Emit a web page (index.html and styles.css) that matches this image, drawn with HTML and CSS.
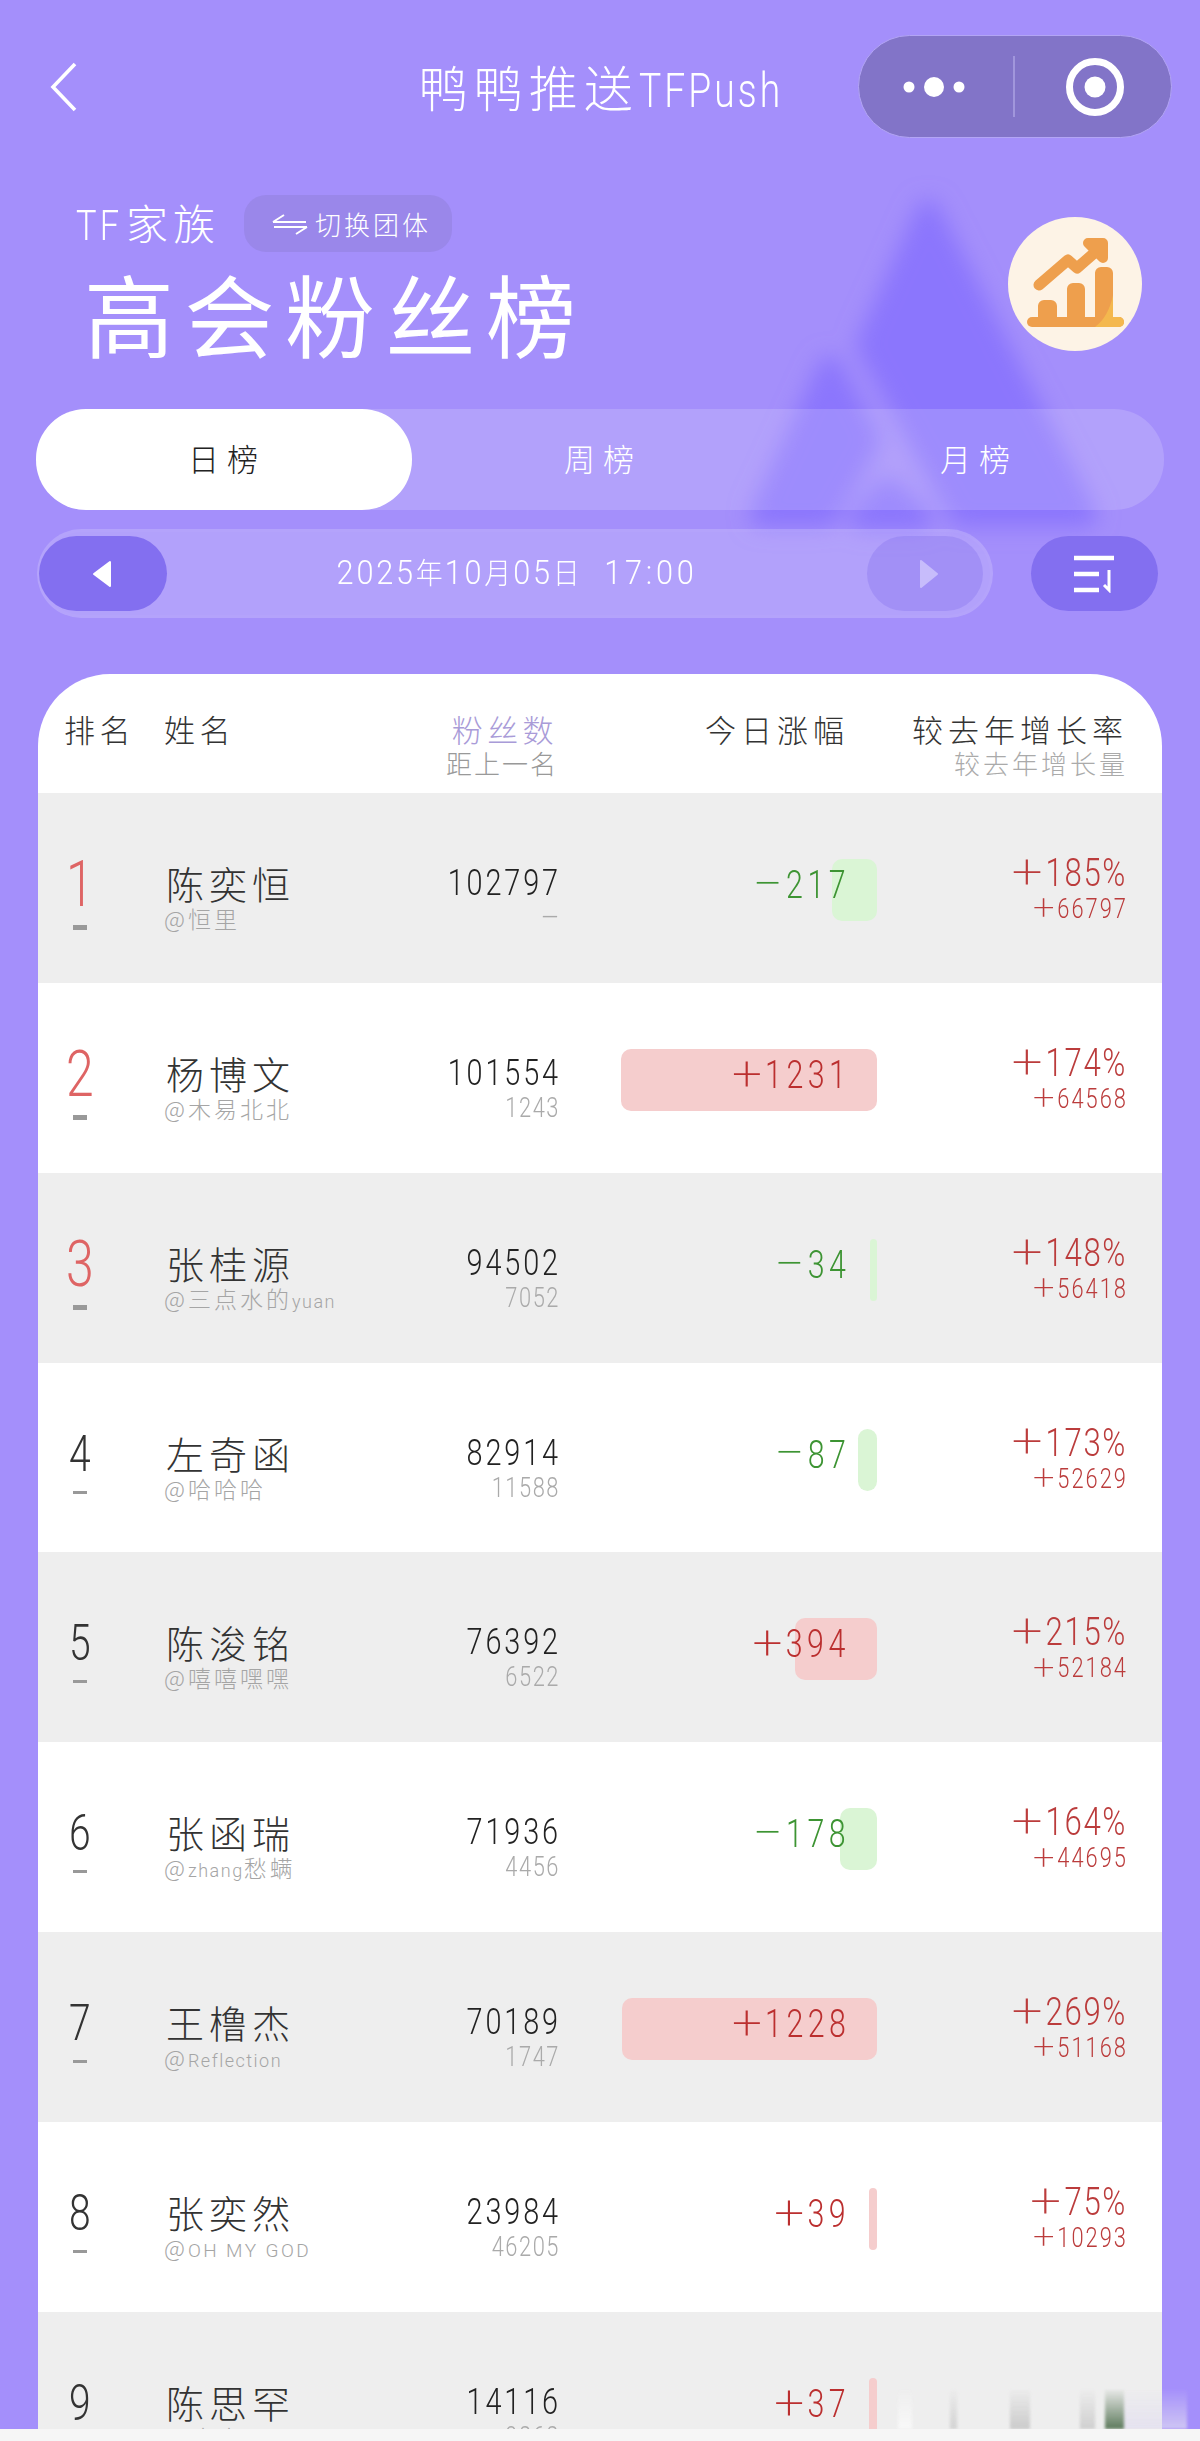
FILE: index.html
```html
<!DOCTYPE html>
<html lang="zh-CN">
<head>
<meta charset="utf-8">
<title>高会粉丝榜</title>
<link rel="stylesheet" href="styles.css">
</head>
<body>
<div class="page">
  <svg class="bgshapes" viewBox="0 0 1200 640" width="1200" height="640" aria-hidden="true">
    <defs><filter id="soft" x="-30%" y="-30%" width="160%" height="160%"><feGaussianBlur stdDeviation="11"/></filter></defs>
    <g filter="url(#soft)" fill="#8b76fd" stroke="#8b76fd" stroke-width="24" stroke-linejoin="round">
      <polygon points="928,212 1085,515 962,515 868,345"/>
      <polygon points="830,368 868,440 826,515 762,515"/>
      <polygon points="888,490 920,518 862,518"/>
    </g>
  </svg>

  <header class="nav">
    <svg class="back" viewBox="0 0 28 52" width="28" height="52"><path d="M25 3 3 26l22 23" fill="none" stroke="#fff" stroke-width="3.6"/></svg>
    <div class="nav-title">鸭鸭推送<span class="nav-latin">TFPush</span></div>
    <div class="capsule">
      <svg class="dots" viewBox="0 0 64 24" width="64" height="24"><circle cx="6" cy="12" r="5.5" fill="#fff"/><circle cx="31" cy="12" r="10" fill="#fff"/><circle cx="56" cy="12" r="5.5" fill="#fff"/></svg>
      <span class="capsule-line"></span>
      <svg class="target" viewBox="0 0 58 58" width="58" height="58"><circle cx="29" cy="29" r="25.5" fill="none" stroke="#fff" stroke-width="7"/><circle cx="29" cy="29" r="10.5" fill="#fff"/></svg>
    </div>
  </header>

  <section class="hero">
    <div class="hero-left">
      <div class="hero-top">
        <span class="family"><span class="latin">TF</span>家族</span>
        <span class="switch">
          <svg viewBox="0 0 36 22" width="36" height="22"><path d="M1 9h33M1 9l11-7M2 14h33M35 14l-11 7" fill="none" stroke="#fff" stroke-width="2"/></svg>
          切换团体
        </span>
      </div>
      <h1 class="hero-title">高会粉丝榜</h1>
    </div>
    <div class="hero-icon">
      <svg viewBox="0 0 134 134" width="134" height="134">
        <circle cx="67" cy="67" r="67" fill="#fdf3e6"/>
        <path d="M31 68 60 43l9 8 23-20" fill="none" stroke="#ee9f4d" stroke-width="11" stroke-linecap="round" stroke-linejoin="round"/>
        <path d="M80 26h15v15z" fill="#ee9f4d" stroke="#ee9f4d" stroke-width="10" stroke-linejoin="round"/>
        <path d="M30 106V89a6 6 0 0 1 6-6h7a6 6 0 0 1 6 6v17zM59 106V72a6 6 0 0 1 6-6h6a6 6 0 0 1 6 6v34zM87 106V56a6 6 0 0 1 6-6h6a6 6 0 0 1 6 6v50z" fill="#ee9f4d"/>
        <rect x="19" y="100" width="97" height="10" rx="5" fill="#ee9f4d"/>
        <path d="M87 110c9-7 15-17 18-32v22h6a5 5 0 0 1 0 10z" fill="#f4b84e"/>
      </svg>
    </div>
  </section>

  <nav class="tabs">
    <div class="tab tab-on">日榜</div>
    <div class="tab">周榜</div>
    <div class="tab">月榜</div>
  </nav>

  <div class="datebar">
    <div class="track">
      <div class="step step-on"><svg viewBox="0 0 20 28" width="20" height="28"><path d="M18 2v24L2 14z" fill="#fff" stroke="#fff" stroke-width="2" stroke-linejoin="round"/></svg></div>
      <div class="date"><span>2025</span>年<span>10</span>月<span>05</span>日 <span class="time">17:00</span></div>
      <div class="step step-off"><svg viewBox="0 0 20 30" width="20" height="30"><path d="M2 2v26l16-13z" fill="#c7bcfb" stroke="#c7bcfb" stroke-width="2" stroke-linejoin="round"/></svg></div>
    </div>
    <div class="sort"><svg viewBox="0 0 42 38" width="42" height="38"><path d="M0 3h40M0 19h25M0 35h25" fill="none" stroke="#fff" stroke-width="4.5"/><path d="M35 15v20l-5-5" fill="none" stroke="#fff" stroke-width="3"/></svg></div>
  </div>

  <main class="board">
    <div class="thead">
      <div class="th th-rank">排名</div>
      <div class="th th-name">姓名</div>
      <div class="th th-fans"><div class="th-main th-purple">粉丝数</div><div class="th-sub">距上一名</div></div>
      <div class="th th-delta">今日涨幅</div>
      <div class="th th-rate"><div class="th-main">较去年增长率</div><div class="th-sub th-light">较去年增长量</div></div>
    </div>

    <div class="row row-gray">
      <div class="rank"><div class="num top">1</div><div class="dash dash-top"></div></div>
      <div class="who"><div class="name">陈奕恒</div><div class="handle">@恒里</div></div>
      <div class="fans"><div class="fans-num">102797</div><div class="gap gap-none">—</div></div>
      <div class="delta down"><span class="bar" style="width:45px"></span><span class="delta-num"><span class="sign">−</span>217</span></div>
      <div class="rate"><div class="pct"><span class="sign">+</span>185%</div><div class="amt"><span class="sign">+</span>66797</div></div>
    </div>
    <div class="row">
      <div class="rank"><div class="num top">2</div><div class="dash dash-top"></div></div>
      <div class="who"><div class="name">杨博文</div><div class="handle">@木易北北</div></div>
      <div class="fans"><div class="fans-num">101554</div><div class="gap">1243</div></div>
      <div class="delta up"><span class="bar" style="width:256px"></span><span class="delta-num"><span class="sign">+</span>1231</span></div>
      <div class="rate"><div class="pct"><span class="sign">+</span>174%</div><div class="amt"><span class="sign">+</span>64568</div></div>
    </div>
    <div class="row row-gray">
      <div class="rank"><div class="num top">3</div><div class="dash dash-top"></div></div>
      <div class="who"><div class="name">张桂源</div><div class="handle">@三点水的<span class="lat">yuan</span></div></div>
      <div class="fans"><div class="fans-num">94502</div><div class="gap">7052</div></div>
      <div class="delta down"><span class="bar" style="width:7px"></span><span class="delta-num"><span class="sign">−</span>34</span></div>
      <div class="rate"><div class="pct"><span class="sign">+</span>148%</div><div class="amt"><span class="sign">+</span>56418</div></div>
    </div>
    <div class="row">
      <div class="rank"><div class="num">4</div><div class="dash"></div></div>
      <div class="who"><div class="name">左奇函</div><div class="handle">@哈哈哈</div></div>
      <div class="fans"><div class="fans-num">82914</div><div class="gap">11588</div></div>
      <div class="delta down"><span class="bar" style="width:19px"></span><span class="delta-num"><span class="sign">−</span>87</span></div>
      <div class="rate"><div class="pct"><span class="sign">+</span>173%</div><div class="amt"><span class="sign">+</span>52629</div></div>
    </div>
    <div class="row row-gray">
      <div class="rank"><div class="num">5</div><div class="dash"></div></div>
      <div class="who"><div class="name">陈浚铭</div><div class="handle">@嘻嘻嘿嘿</div></div>
      <div class="fans"><div class="fans-num">76392</div><div class="gap">6522</div></div>
      <div class="delta up"><span class="bar" style="width:82px"></span><span class="delta-num"><span class="sign">+</span>394</span></div>
      <div class="rate"><div class="pct"><span class="sign">+</span>215%</div><div class="amt"><span class="sign">+</span>52184</div></div>
    </div>
    <div class="row">
      <div class="rank"><div class="num">6</div><div class="dash"></div></div>
      <div class="who"><div class="name">张函瑞</div><div class="handle">@<span class="lat">zhang</span>愁螨</div></div>
      <div class="fans"><div class="fans-num">71936</div><div class="gap">4456</div></div>
      <div class="delta down"><span class="bar" style="width:37px"></span><span class="delta-num"><span class="sign">−</span>178</span></div>
      <div class="rate"><div class="pct"><span class="sign">+</span>164%</div><div class="amt"><span class="sign">+</span>44695</div></div>
    </div>
    <div class="row row-gray">
      <div class="rank"><div class="num">7</div><div class="dash"></div></div>
      <div class="who"><div class="name">王橹杰</div><div class="handle">@<span class="lat">Reflection</span></div></div>
      <div class="fans"><div class="fans-num">70189</div><div class="gap">1747</div></div>
      <div class="delta up"><span class="bar" style="width:255px"></span><span class="delta-num"><span class="sign">+</span>1228</span></div>
      <div class="rate"><div class="pct"><span class="sign">+</span>269%</div><div class="amt"><span class="sign">+</span>51168</div></div>
    </div>
    <div class="row">
      <div class="rank"><div class="num">8</div><div class="dash"></div></div>
      <div class="who"><div class="name">张奕然</div><div class="handle">@<span class="lat lat-caps">OH MY GOD</span></div></div>
      <div class="fans"><div class="fans-num">23984</div><div class="gap">46205</div></div>
      <div class="delta up"><span class="bar" style="width:8px"></span><span class="delta-num"><span class="sign">+</span>39</span></div>
      <div class="rate"><div class="pct"><span class="sign">+</span>75%</div><div class="amt"><span class="sign">+</span>10293</div></div>
    </div>
    <div class="row row-gray">
      <div class="rank"><div class="num">9</div><div class="dash"></div></div>
      <div class="who"><div class="name">陈思罕</div><div class="handle">@哈哈</div></div>
      <div class="fans"><div class="fans-num">14116</div><div class="gap">9868</div></div>
      <div class="delta up"><span class="bar" style="width:8px"></span><span class="delta-num"><span class="sign">+</span>37</span></div>
      <div class="rate"></div>
    </div>
  </main>

  <div class="mark mark-one">微信公众号:鸭鸭推送TFPush</div>
  <div class="mark mark-two">微信公众号:鸭鸭推送TFPush</div>
  <div class="smear"></div>
</div>
<div class="strip"></div>
</body>
</html>
```

FILE: styles.css
```css
* { box-sizing: border-box; }
html, body { margin: 0; padding: 0; }
body {
  width: 1200px;
  height: 2441px;
  overflow: hidden;
  background: #f6f6f6;
  font-family: "Noto Sans CJK SC", "Liberation Sans", sans-serif;
  font-weight: 300;
  color: #333;
}
.page {
  position: relative;
  height: 2429px;
  padding-top: 35px;
  overflow: hidden;
  background: #a48ffb;
}
.strip { height: 12px; background: #f6f6f6; }
.bgshapes { position: absolute; left: 0; top: 0; }

.nav {
  position: relative;
  display: grid;
  grid-template-columns: 1fr auto 1fr;
  align-items: center;
  height: 103px;
  padding: 0 28px 0 50px;
}
.nav-title {
  color: #fff;
  font-size: 49px;
  letter-spacing: 6px;
  line-height: 60px;
  white-space: nowrap;
  margin-top: 4px;
  transform: translateX(-11px);
}
.nav-latin {
  display: inline-block;
  margin-right: -47px;
  font-family: Roboto, sans-serif;
  font-size: 49px;
  letter-spacing: 4px;
  transform: scaleX(.76);
  transform-origin: left center;
}
.back { justify-self: start; }
.capsule {
  justify-self: end;
  display: flex;
  align-items: center;
  width: 314px;
  height: 103px;
  border-radius: 52px;
  background: #8274c8;
  border: 1.5px solid #b3a5f5;
}
.dots { margin-left: 44px; }
.capsule-line { width: 2px; height: 61px; margin-left: 46px; background: #a196dc; }
.target { margin-left: 51px; }

.hero {
  position: relative;
  display: flex;
  justify-content: space-between;
  align-items: flex-start;
  height: 271px;
  padding: 57px 58px 0 76px;
}
.hero-top { display: flex; align-items: center; gap: 24px; height: 57px; }
.family { color: #fff; font-size: 42px; letter-spacing: 5px; line-height: 57px; white-space: nowrap; }
.latin {
  display: inline-block;
  margin-right: -8px;
  font-family: Roboto, sans-serif;
  font-size: 43px;
  letter-spacing: 4px;
  transform: scaleX(.8);
  transform-origin: left center;
}
.switch {
  display: flex;
  align-items: center;
  gap: 7px;
  height: 57px;
  padding: 0 21px 0 28px;
  border-radius: 22px;
  background: #9a87ea;
  color: #fff;
  font-size: 26px;
  letter-spacing: 3px;
  white-space: nowrap;
}
.hero-title {
  margin: 6px 0 0 8px;
  color: #fff;
  font-size: 90px;
  font-weight: 400;
  letter-spacing: 10.5px;
  line-height: 108px;
  white-space: nowrap;
}
.hero-icon { margin-top: 22px; width: 134px; height: 134px; }

.tabs {
  position: relative;
  display: grid;
  grid-template-columns: repeat(3, 1fr);
  width: 1128px;
  height: 101px;
  margin-left: 36px;
  border-radius: 50px;
  background: rgba(255, 255, 255, .16);
}
.tab {
  display: flex;
  align-items: center;
  justify-content: center;
  padding: 0 0 5px 6px;
  border-radius: 50px;
  color: #fff;
  font-size: 31px;
  letter-spacing: 8px;
}
.tab-on { background: #fff; color: #222; }

.datebar {
  position: relative;
  display: flex;
  align-items: center;
  margin: 19px 0 0 37px;
}
.track {
  display: flex;
  align-items: center;
  justify-content: space-between;
  width: 956px;
  height: 89px;
  padding: 0 7px 0 0;
  border-radius: 45px;
  background: rgba(255, 255, 255, .16);
  border: 3px solid rgba(255, 255, 255, .03);
}
.step {
  display: flex;
  align-items: center;
  justify-content: center;
  height: 75px;
  border-radius: 38px;
}
.step-on { width: 128px; margin-left: -1px; padding-right: 2px; background: #836ff0; }
.step-off { width: 116px; padding-left: 8px; background: rgba(125, 105, 235, .3); }
.date {
  padding-bottom: 5px;
  color: #fff;
  font-size: 29px;
  letter-spacing: 2px;
  white-space: nowrap;
  transform: scaleX(.93);
}
.date span { font-family: Roboto, sans-serif; font-size: 33px; letter-spacing: 3px; }
.date .time { margin-left: 16px; letter-spacing: 4px; }
.sort {
  display: flex;
  align-items: center;
  justify-content: center;
  width: 127px;
  height: 75px;
  margin-left: 38px;
  border-radius: 38px;
  background: #836ff0;
}

.board {
  position: relative;
  width: 1124px;
  margin: 56px 0 0 38px;
  border-radius: 72px 72px 0 0;
  overflow: hidden;
  background: #fff;
}
.thead, .row {
  display: grid;
  grid-template-columns: 126px 174px 220px 319px 248px;
}
.thead { height: 119px; padding-top: 33px; }
.row { height: 189.85px; background: #fff; }
.row-gray { background: #eee; }

.th { font-size: 31px; letter-spacing: 4.4px; line-height: 44px; color: #333; white-space: nowrap; }
.th-rank { padding-left: 26px; }
.th-fans, .th-delta, .th-rate { text-align: right; }
.th-delta { padding-right: 28px; letter-spacing: 5px; }
.th-rate { margin-right: -3px; letter-spacing: 5px; }
.th-main { height: 44px; }
.th-sub { font-size: 26px; letter-spacing: 2px; line-height: 28px; color: #999; margin-top: -2px; }
.th-light { color: #aaa; letter-spacing: 3px; }
.th-purple { color: #a99bd8; }

.rank { display: flex; flex-direction: column; align-items: center; width: 83px; height: 190px; }
.num {
  height: 128px;
  padding-top: 58px;
  font-family: Roboto, sans-serif;
  font-size: 50px;
  line-height: 66px;
  color: #333;
  transform: scaleX(.78);
}
.num.top { height: 132px; padding-top: 53px; font-size: 64px; line-height: 78px; color: #de6464; }
.dash { width: 14px; height: 3px; background: #999; }
.dash-top { height: 5px; }

.who { padding-top: 67px; white-space: nowrap; }
.name { font-size: 38px; letter-spacing: 5px; line-height: 46px; color: #333; padding-left: 2px; }
.handle { font-size: 23px; letter-spacing: 3px; line-height: 28px; color: #a5a5a5; margin-top: -2px; }
.lat { font-family: Roboto, sans-serif; font-size: 18px; letter-spacing: 1.5px; }
.lat-caps { font-size: 19px; letter-spacing: 2.4px; }

.fans { padding-top: 67px; text-align: right; font-family: Roboto, sans-serif; white-space: nowrap; }
.fans-num, .gap, .amt { transform: scaleX(.78); transform-origin: right center; }
.delta-num, .pct { transform: scaleX(.8); transform-origin: right center; }
.fans-num { margin-right: -3px; font-size: 37px; letter-spacing: 3.7px; line-height: 46px; color: #222; }
.gap { margin: -5px -2px 0 0; font-size: 28px; letter-spacing: 2px; line-height: 34px; color: #aaa; }

.sign {
  display: inline-block;
  margin-right: 4px;
  font-size: 1.25em;
  font-weight: 200;
  line-height: 0;
  letter-spacing: 0;
  vertical-align: -.04em;
  transform: scaleX(1.4);
  transform-origin: right center;
}

.delta { position: relative; font-family: Roboto, sans-serif; white-space: nowrap; }
.delta-num {
  position: absolute;
  right: 27px;
  top: 69px;
  font-size: 38px;
  font-weight: 300;
  letter-spacing: 5.6px;
  line-height: 46px;
}
.bar { position: absolute; right: 0; top: 66px; height: 62px; border-radius: 10px; }
.up .bar { background: #f5cdcd; }
.down .bar { background: #daf5d5; }
.up .delta-num { color: #bb2f2f; }
.down .delta-num { color: #3d9433; }

.rate { padding-top: 58px; text-align: right; font-family: Roboto, sans-serif; color: #bb3c3c; white-space: nowrap; }
.pct { margin-right: -2px; font-size: 39px; letter-spacing: 2px; line-height: 44px; }
.amt { margin: -3px -3px 0 0; font-size: 28px; letter-spacing: 2.6px; line-height: 34px; }

.mark {
  position: absolute;
  left: 328px;
  transform-origin: left top;
  transform: rotate(-10.5deg);
  font-size: 42px;
  letter-spacing: 6px;
  line-height: 50px;
  color: rgba(0, 0, 0, .022);
  white-space: nowrap;
}
.mark-one { top: 968px; }
.mark-two { top: 1444px; }

.smear {
  position: absolute;
  left: 895px;
  top: 2388px;
  width: 305px;
  height: 41px;
  filter: blur(1.5px);
  background:
    linear-gradient(90deg, transparent 0 3px, #f8f8f8 3px 17px, transparent 17px 55px, rgba(170,170,170,.4) 55px 62px, transparent 62px 115px, rgba(160,160,160,.45) 115px 135px, transparent 135px 185px, rgba(150,150,150,.35) 185px 200px, transparent 200px 210px, #5d7a5c 210px 229px, rgba(225,220,240,.7) 229px 292px, transparent 292px);
  -webkit-mask-image: linear-gradient(180deg, transparent, #000);
  mask-image: linear-gradient(180deg, transparent, #000);
}
```
